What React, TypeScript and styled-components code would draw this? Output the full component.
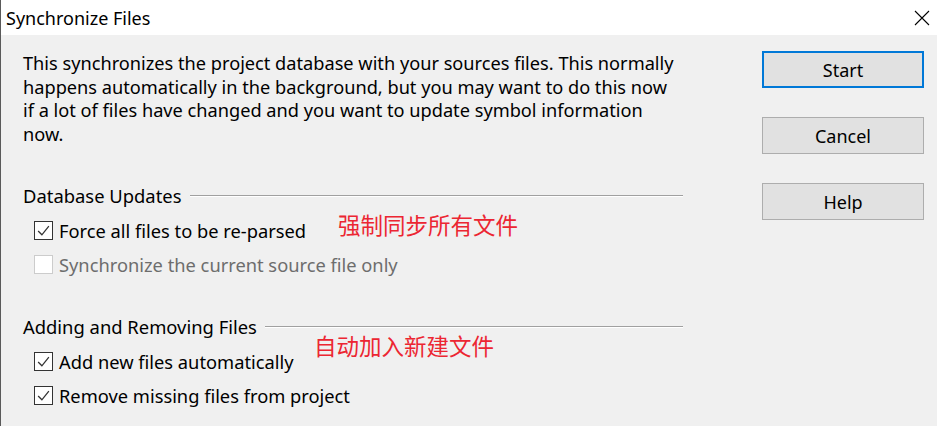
import React from 'react';
import styled, {createGlobalStyle} from 'styled-components';

const GlobalStyle = createGlobalStyle`
	*, *::before, *::after {
		box-sizing: border-box;
	}
	html, body {
		margin: 0;
		padding: 0;
		background: #f0f0f0;
	}
	body {
		font-family: "Noto Sans", "Noto Sans CJK SC", sans-serif;
		color: #000;
	}
`

const Window = styled.div`
	width: 937px;
	height: 426px;
	border-left: 1px solid #5a5a5a;
	display: flex;
	flex-direction: column;
	background: #f0f0f0;
	overflow: hidden;
`

const TitleBar = styled.div`
	height: 35px;
	flex: none;
	background: #fff;
	display: flex;
	align-items: center;
	justify-content: space-between;
	padding: 0 0 0 5px;
`

const Title = styled.span`
	font-size: 18px;
`

const CloseButton = styled.button`
	width: 30px;
	height: 30px;
	padding: 0;
	border: none;
	background: transparent;
	display: flex;
	align-items: center;
	justify-content: center;
`

const Body = styled.div`
	flex: 1;
	display: flex;
	padding: 17px 13px 0 22px;
	gap: 79px;
`

const Main = styled.div`
	width: 660px;
	display: flex;
	flex-direction: column;
`

const Intro = styled.p`
	margin: 0;
	font-size: 18.2px;
	line-height: 23.5px;
	white-space: nowrap;
`

const Group = styled.section<{ $top: number }>`
	position: relative;
	margin-top: ${props => props.$top}px;
`

const GroupHeader = styled.div`
	display: flex;
	align-items: center;
	gap: 8px;
	font-size: 18.4px;
	height: 24px;

	&::after {
		content: "";
		flex: 1;
		height: 2px;
		border-top: 1px solid #a0a0a0;
		border-bottom: 1px solid #fff;
		margin-top: 2px;
	}
`

const Options = styled.div`
	display: flex;
	flex-direction: column;
	gap: 10px;
	padding: 11px 0 0 11px;
`

const Option = styled.label<{ $disabled?: boolean }>`
	display: flex;
	align-items: center;
	gap: 6px;
	height: 24px;
	font-size: 18.3px;
	white-space: nowrap;
	color: ${props => props.$disabled ? '#6d6d6d' : '#000'};
`

const Box = styled.span<{ $disabled?: boolean }>`
	width: 19px;
	height: 19px;
	border: 1px solid ${props => props.$disabled ? '#cccccc' : '#333333'};
	background: #fff;
	display: flex;
	align-items: center;
	justify-content: center;
	flex: none;
`

const Note = styled.span<{ $left: number, $top: number }>`
	position: absolute;
	left: ${props => props.$left}px;
	top: ${props => props.$top}px;
	font-family: "Noto Sans CJK SC", sans-serif;
	font-size: 22.5px;
	line-height: 26px;
	color: #ec2632;
	white-space: nowrap;
`

const Side = styled.div`
	display: flex;
	flex-direction: column;
	gap: 29px;
	margin-top: -1px;
	width: 162px;
`

const Button = styled.button<{ $primary?: boolean }>`
	height: 37px;
	background: #e1e1e1;
	border: ${props => props.$primary ? '2px solid #0078d7' : '1px solid #adadad'};
	font-family: "Noto Sans", sans-serif;
	font-size: 18px;
	color: #000;
	padding: 0;
`

interface ICheck {
	label: string
	checked?: boolean
	disabled?: boolean
}

const Check: React.FC<ICheck> = ({label, checked, disabled}) => (
	<Option $disabled={disabled}>
		<Box $disabled={disabled}>
			{checked && (
				<svg width="15" height="15" viewBox="0 0 14 14">
					<polyline points="2,7.5 5.5,11 12,3" fill="none" stroke="#333" strokeWidth="1.2"/>
				</svg>
			)}
		</Box>
		{label}
	</Option>
)

const App: React.FC = () => {
	return (
		<Window>
			<GlobalStyle/>
			<TitleBar>
				<Title>Synchronize Files</Title>
				<CloseButton aria-label="Close">
					<svg width="16" height="16" viewBox="0 0 16 16">
						<path d="M1 1 L15 15 M15 1 L1 15" stroke="#000" strokeWidth="1.1"/>
					</svg>
				</CloseButton>
			</TitleBar>
			<Body>
				<Main>
					<Intro>
						This synchronizes the project database with your sources files. This normally<br/>
						happens automatically in the background, but you may want to do this now<br/>
						if a lot of files have changed and you want to update symbol information<br/>
						now.
					</Intro>
					<Group $top={37}>
						<GroupHeader>Database Updates</GroupHeader>
						<Options>
							<Check label="Force all files to be re-parsed" checked/>
							<Check label="Synchronize the current source file only" disabled/>
						</Options>
						<Note $left={315} $top={28}>强制同步所有文件</Note>
					</Group>
					<Group $top={38}>
						<GroupHeader>Adding and Removing Files</GroupHeader>
						<Options>
							<Check label="Add new files automatically" checked/>
							<Check label="Remove missing files from project" checked/>
						</Options>
						<Note $left={291} $top={18}>自动加入新建文件</Note>
					</Group>
				</Main>
				<Side>
					<Button $primary>Start</Button>
					<Button>Cancel</Button>
					<Button>Help</Button>
				</Side>
			</Body>
		</Window>
	);
}

export default App;
